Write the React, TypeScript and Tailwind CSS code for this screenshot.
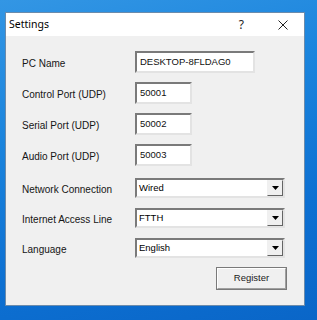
import React from 'react';

const labelFont = { fontFamily: '"Liberation Sans", Arial, sans-serif' };

const TextBox: React.FC<{ value: string; width: string }> = ({ value, width }) => (
  <div
    className={`${width} h-[22px] bg-white border-2 border-t-[#7a7a7a] border-l-[#7a7a7a] border-r-[#e3e3e3] border-b-[#e3e3e3] flex items-center pl-[3px] text-[9.5px] text-[#101010]`}
  >
    {value}
  </div>
);

const ComboBox: React.FC<{ value: string }> = ({ value }) => (
  <div className="w-[150px] h-[20px] bg-white border-2 border-t-[#7a7a7a] border-l-[#7a7a7a] border-r-[#e3e3e3] border-b-[#e3e3e3] flex items-center">
    <span className="flex-1 pl-[2px] text-[9.5px] text-black">{value}</span>
    <div className="w-[16px] h-full bg-[#f0f0f0] border border-t-[#f0f0f0] border-l-[#f0f0f0] border-r-[#646464] border-b-[#646464] flex items-center justify-center">
      <svg width="7" height="4" viewBox="0 0 7 4">
        <path d="M0 0h7L3.5 4z" fill="#000" />
      </svg>
    </div>
  </div>
);

const Row: React.FC<{ label: string; children: React.ReactNode; className?: string }> = ({ label, children, className }) => (
  <div className={`flex items-center ${className ?? ''}`}>
    <span className="w-[113px] pt-[2px] text-[10px] text-[#151515]">{label}</span>
    {children}
  </div>
);

export default function App() {
  return (
    <div className="w-[317px] h-[320px] overflow-hidden bg-[linear-gradient(165deg,#3396e4_0%,#1a84dd_35%,#0d70d2_70%,#0a66c8_100%)] pt-[12px] pl-[5px]" style={labelFont}>
      <div className="w-[300px] h-[294px] border border-[#6b8bab] bg-[#f0f0f0] flex flex-col">
        <div className="h-[23px] bg-white flex items-center">
          <span className="pl-[3px] text-[10.5px] text-black" style={{ fontFamily: '"Noto Sans", "Open Sans", sans-serif' }}>
            Settings
          </span>
          <span className="ml-auto mr-[34px] text-[12px] text-[#222]" style={{ fontFamily: '"Noto Sans", sans-serif' }}>?</span>
          <svg className="mr-[16px]" width="10" height="10" viewBox="0 0 10 10">
            <path d="M0.5 0.5L9.5 9.5M9.5 0.5L0.5 9.5" stroke="#222" strokeWidth="1" />
          </svg>
        </div>
        <div className="flex flex-col pl-[16px] pt-[15px]">
          <Row label="PC Name">
            <TextBox value="DESKTOP-8FLDAG0" width="w-[120px]" />
          </Row>
          <Row label="Control Port (UDP)" className="mt-[9px]">
            <TextBox value="50001" width="w-[57px]" />
          </Row>
          <Row label="Serial Port (UDP)" className="mt-[9px]">
            <TextBox value="50002" width="w-[57px]" />
          </Row>
          <Row label="Audio Port (UDP)" className="mt-[9px]">
            <TextBox value="50003" width="w-[57px]" />
          </Row>
          <Row label="Network Connection" className="mt-[12px]">
            <ComboBox value="Wired" />
          </Row>
          <Row label="Internet Access Line" className="mt-[10px]">
            <ComboBox value="FTTH" />
          </Row>
          <Row label="Language" className="mt-[10px]">
            <ComboBox value="English" />
          </Row>
          <div className="flex mt-[9px] pl-[194px]">
            <button className="w-[71px] h-[23px] border border-[#7a7a7a] bg-[#f0f0f0] text-[9.5px] text-[#1a1a1a] flex items-center justify-center">
              <span className="w-full h-full border border-t-white border-l-white border-r-[#a0a0a0] border-b-[#a0a0a0] flex items-center justify-center">
                Register
              </span>
            </button>
          </div>
        </div>
      </div>
    </div>
  );
}
